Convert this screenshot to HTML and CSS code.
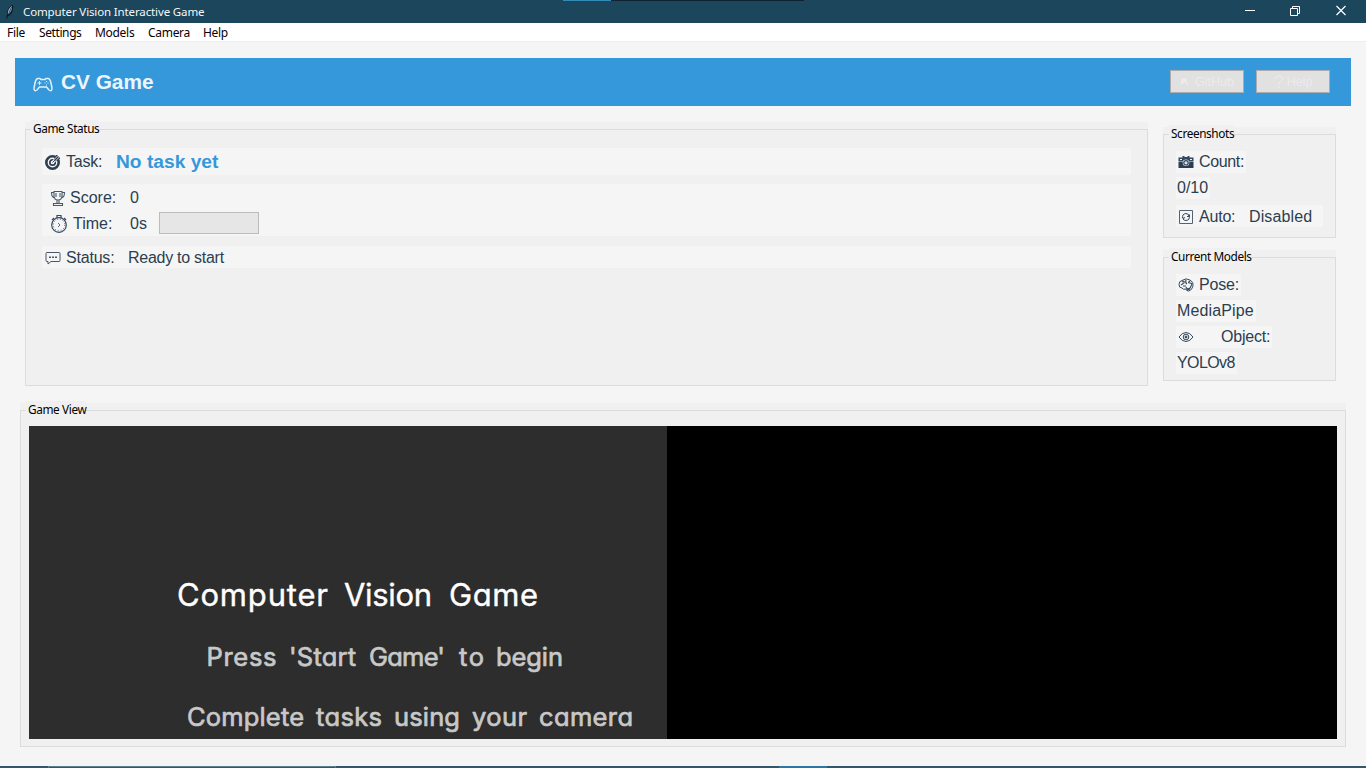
FILE: index.html
```html
<!DOCTYPE html>
<html lang="en">
<head>
<meta charset="utf-8">
<title>Computer Vision Interactive Game</title>
<link rel="stylesheet" href="styles.css">
</head>
<body>
<header class="titlebar">
  <span class="strip"></span>
  <svg class="feather" width="10" height="16" viewBox="0 0 10 16"><path d="M1 15 2 10Q2 4 7 1Q9 1 8 5Q7 11 3 12Z" fill="#101820"/><path d="M2.700 10Q3 4 7 2Q7.500 6 4 10Z" fill="#9cbfe3"/><path d="M1.500 15 6.500 3" stroke="#142334" stroke-width=".8"/></svg>
  <span class="title">Computer Vision Interactive Game</span>
  <svg class="controls" width="104" height="14" viewBox="0 0 104 14" fill="none" stroke="#fff"><path d="M0 7.500h10M45.500 5.500h7v7h-7zM47.500 5.500v-2h7v7h-2"/><path d="m91.500 3 9 9m0-9-9 9" stroke-width="1.200"/></svg>
</header>
<nav class="menu"><span class="m-file">File</span><span class="m-settings">Settings</span><span class="m-models">Models</span><span class="m-camera">Camera</span><span>Help</span></nav>
<main>
  <section class="banner">
    <svg class="pad" width="20" height="15" viewBox="0 0 20 15" fill="none" stroke="#e2f1fb" stroke-width="1.500"><path d="M5 1.500h2l1 1h4l1-1h2Q17 1.500 18 6L19 11Q19 15 16 13L13.500 10h-7L4 13Q1 15 1 11L2 6Q3 1.500 5 1.500Z"/><path d="M6.500 4v4m-2-2h4M13.500 4v1m-2 1h1m2 0h1m-2 1.500v1" stroke-width="1"/></svg>
    <h1>CV Game</h1>
    <button class="faint"><svg width="10" height="11" viewBox="0 0 10 11"><path d="M1 3 6 2 8 10H7L5 6 1 9Z" fill="#ebebeb"/></svg><span>GitHub</span></button>
    <button class="faint help"><svg width="10" height="13" viewBox="0 0 10 13" fill="none" stroke="#ededed"><path d="M1.500 4Q2 1 5 1Q8.500 1 8.500 4Q8 6 5 8v2M4 12h2"/></svg><span>Help</span></button>
  </section>
  <div class="upper">
    <section class="frame status-frame">
      <div class="box">
        <h2>Game Status</h2>
        <div class="row task"><svg width="16" height="16" viewBox="0 0 16 16" fill="none" stroke="#2c3e50"><circle cx="7.500" cy="8.500" r="6.200" stroke-width="2.600"/><circle cx="7.500" cy="8.500" r="2.700" stroke-width="1.700"/><path d="m7 9 6-6" stroke="#f5f5f5" stroke-width="3"/><path d="m7.500 8.500 6-6M12 1v3h3l-2 2h-3V3z"/></svg><span class="lab">Task:</span><strong>No task yet</strong></div>
        <div class="group">
          <div class="row score"><svg width="16" height="17" viewBox="0 0 16 17" fill="none" stroke="#46596b" stroke-width="1.100"><path d="M4 1.500h8v4Q12 10 8 10Q4 10 4 5.500ZM4 2.500H1.500Q1.500 7.500 5 8M12 2.500h2.500Q14.500 7.500 11 8M6 3v4M10 3v4M7 10v3M9 10v3M4 13.500h8M3.500 15.500h9V13.500h-9z"/></svg><span class="lab">Score:</span><span>0</span></div>
          <div class="row time"><svg width="18" height="19" viewBox="0 0 18 19" fill="none" stroke="#34495e" stroke-width="1.200"><circle cx="9" cy="11" r="7.300"/><circle cx="9" cy="11" r="5.700" stroke-width=".8" stroke-dasharray="1 2"/><path d="M7 4V1.500h4V4M2 6l2-2M14 4l2 2"/><path d="m8 9 2 2-2 2" stroke-width=".8"/></svg><span class="lab">Time:</span><span class="seconds">0s</span><i class="progress"></i></div>
        </div>
        <div class="row status"><svg width="16" height="14" viewBox="0 0 16 14" fill="none" stroke="#46596b"><path d="M2 1.500h12q1 0 1 1v7q0 1-1 1H6l-3 2.500v-2.500H2q-1 0-1-1v-7q0-1 1-1z"/><path d="M4 6.200h2m1 0h2m1 0h2" stroke-width="1.600"/></svg><span class="lab">Status:</span><span class="message">Ready to start</span></div>
      </div>
    </section>
    <aside>
      <section class="frame shots">
        <div class="box">
          <h2>Screenshots</h2>
          <div class="row count"><svg width="16" height="14" viewBox="0 0 16 14"><path d="M.5 2.500h4V1h2v1h3V1h2v1.500h4v3.500h-15z" fill="#34495e"/><path d="M.5 6.500h15V13H.5z" fill="#2c3e50"/><circle cx="8" cy="7.800" r="3.300" fill="#dfe3e6"/><circle cx="8" cy="7.800" r="2.200" fill="none" stroke="#34495e" stroke-width="1.200"/><path d="M2 4.500h2m8 0h2" stroke="#f5f5f5"/></svg><span class="lab">Count:</span></div>
          <div class="row total"><span>0/10</span></div>
          <div class="row auto"><svg width="16" height="16" viewBox="0 0 16 16" fill="none" stroke="#526474"><path d="M1.500 1.500h13v13h-13z"/><path d="M5 9.500Q3.500 5 8 4.500q3 0 3 3M11 6.500Q12.500 11 8 11.500q-2 0-3-1.500M4 8l1.200 1.500L7 8.500m2-1h2.500V5.500" stroke="#34495e"/></svg><span class="lab">Auto:</span><span class="disabled">Disabled</span></div>
        </div>
      </section>
      <section class="frame models">
        <div class="box">
          <h2>Current Models</h2>
          <div class="row pose"><svg width="16" height="14" viewBox="0 0 16 14" fill="none" stroke="#34495e"><path d="M4 2.500Q8-.5 12 2Q16 4 15 8Q14 12 11 13Q8 13 8 11Q5 12 4 10Q1 10 1 6.500Q1 3 4 2.500Z"/><path d="M4 4Q7 2 6 5L3 7M8 2Q7 5 9 6M5 8h3M12 3q-3 2 0 2 3 0 1 3M8 9q1 3 4 1l1-2M9 12l3-1" stroke-width="1.100"/></svg><span class="lab">Pose:</span></div>
          <div class="row media"><span>MediaPipe</span></div>
          <div class="row object"><svg width="16" height="12" viewBox="0 0 16 12" fill="none" stroke="#34495e"><path d="M1 6Q4 1.500 8 1.500T15 6Q12 10.500 8 10.500T1 6Z"/><circle cx="8" cy="6" r="2.800"/><circle cx="8" cy="6" r="1" fill="#34495e"/></svg><span class="lab">Object:</span></div>
          <div class="row yolo"><span>YOLOv8</span></div>
        </div>
      </section>
    </aside>
  </div>
  <section class="frame view">
    <div class="box">
      <h2>Game View</h2>
      <div class="screen">
        <svg class="camera" width="638" height="313" viewBox="29 426 638 313">
          <g class="big"><text x="177" y="605.500" textLength="151">Computer</text><text x="344" y="605.500" textLength="88">Vision</text><text x="449" y="605.500" textLength="89">Game</text></g>
          <g class="small"><text x="206.500" y="666" textLength="70">Press</text><text x="289" y="666" textLength="67">'Start</text><text x="369" y="666" textLength="76">Game'</text><text x="459" y="666" textLength="25">to</text><text x="496" y="666" textLength="67">begin</text>
          <text x="187" y="726" textLength="117">Complete</text><text x="316" y="726" textLength="66">tasks</text><text x="394" y="726" textLength="66">using</text><text x="472" y="726" textLength="55">your</text><text x="539" y="726" textLength="94">camera</text></g>
        </svg>
      </div>
    </div>
  </section>
</main>
<footer class="taskbar"><span class="task-outline"></span><span class="task-active"></span></footer>
</body>
</html>
```
FILE: styles.css
```css
* { box-sizing: border-box; }
body { margin: 0; width: 1366px; height: 768px; overflow: hidden; display: flex; flex-direction: column; background: #f5f5f5; color: #2c3e50; font: 16px/20px "Liberation Sans", Arial, sans-serif; }
svg { display: block; flex: none; }
.titlebar { position: relative; flex: none; height: 23px; background: #1b465c; color: #f4f7f9; display: flex; align-items: center; padding-left: 5px; font: 12px/16px "Noto Sans", sans-serif; }
.strip { position: absolute; top: 0; left: 563px; width: 241px; height: 1px; background: linear-gradient(90deg, #348ab8 48px, #10222d 48px); }
.title { margin-left: 8px; font-size: 11.500px; letter-spacing: -.13px; white-space: nowrap; }
.controls { margin: -3px 17px 0 auto; }
.menu { flex: none; height: 19px; background: #fff; border-bottom: 1px solid #efefef; color: #080008; font: 12px/19px "Noto Sans", sans-serif; letter-spacing: -.3px; display: flex; padding-left: 7px; }
.m-file { width: 32px; } .m-settings { width: 56px; letter-spacing: -.4px; } .m-models { width: 53px; } .m-camera { width: 55px; }
main { flex: 1; padding: 16px 20px 0; }
.banner { height: 48px; margin: 0 -5px; background: #3498db; display: flex; align-items: center; padding: 0 21px 0 18px; }
.pad { margin-top: 5px; }
h1 { margin: 0 auto 0 8px; font-size: 20.800px; line-height: 24px; color: #ecf5fc; }
.faint { width: 74px; height: 23px; margin: 0 0 1px 12px; padding: 0; border: 1px solid #adadad; background: #e1e1e1; color: #ebebeb; font: 12.500px/20px "Liberation Sans", sans-serif; display: flex; align-items: center; justify-content: center; gap: 5px; }
.faint.help { gap: 3px; }
.upper { display: flex; justify-content: space-between; padding: 16px 10px 0 5px; height: 297px; }
.frame { background: #f0f0f0; padding-top: 7px; }
.box { border: 1px solid #dcdcdc; height: 100%; }
h2 { width: max-content; margin: -10px 0 0 5px; padding: 0 0 1px 2px; background: #f0f0f0; color: #000; font: 11.800px/16px "Noto Sans", sans-serif; letter-spacing: -.38px; }
.status-frame { width: 1123px; height: 264px; }
.row { display: flex; align-items: center; white-space: nowrap; background: #f5f5f5; }
.status-frame .row, .group { margin-left: 16px; margin-right: 16px; }
.status-frame .group .row { margin: 0; }
.task { height: 27px; margin-top: 11px; padding-left: 3px; }
.task svg { margin-top: 1px; }
.lab { letter-spacing: -.2px; }
.task .lab { width: 50px; margin-left: 5px; }
.task strong { color: #3498db; font-size: 19.200px; }
.group { height: 52px; margin-top: 9px; background: #f5f5f5; }
.score { height: 26px; padding: 2px 0 0 8px; } .score .lab { width: 60px; margin-left: 4px; letter-spacing: 0; }
.time { height: 26px; padding-left: 8px; } .time .lab { width: 57px; margin-left: 5px; padding-top: 2px; letter-spacing: 0; }
.seconds { width: 29px; padding-top: 2px; }
.progress { width: 100px; height: 22px; border: 1px solid #bcbcbc; background: #e6e6e6; }
.status { height: 22px; margin-top: 10px; padding: 2px 0 0 3px; } .status .lab { width: 62px; margin-left: 5px; }
.message { letter-spacing: -.27px; }
aside { width: 173px; padding-top: 5px; }
.shots { height: 111px; } .models { height: 131px; margin-top: 12px; }
aside .row { width: max-content; margin-left: 12px; height: 22px; padding: 0 2px; }
.count { margin-top: 9px; } aside .total { margin-top: 4px; padding-left: 1px; } aside .auto { margin-top: 6px; padding-top: 2px; width: 147px; }
aside .lab { margin-left: 5px; } .auto .lab { width: 50px; }
.disabled { letter-spacing: .12px; }
.count .lab { letter-spacing: -.35px; }
.pose { margin-top: 9px; } .media, .object, .yolo { margin-top: 4px; }
aside .media, aside .yolo { padding-left: 1px; }
.media span { letter-spacing: .12px; } .yolo span { letter-spacing: -.6px; }
.object .lab { margin-left: 27px; }
.view { height: 344px; width: 1326px; }
.screen { width: 1308px; height: 313px; margin: 8px 0 0 8px; background: #000; }
.camera { background: #2d2d2d; }
.camera text { font-family: Inter, sans-serif; font-feature-settings: "cv11"; font-weight: 400; stroke-linejoin: round; }
.big { font-size: 31px; fill: #fff; stroke: #fff; stroke-width: .4px; }
.small { font-size: 25.500px; fill: #c8c8c8; stroke: #c8c8c8; stroke-width: .7px; }
.taskbar { flex: none; height: 2px; background: #33566a; display: flex; }
.task-outline { margin-left: 48px; width: 288px; border: 1px solid #5a7f8d; border-bottom: 0; }
.task-active { margin-left: 443px; width: 48px; background: #2d77a3; }
```
